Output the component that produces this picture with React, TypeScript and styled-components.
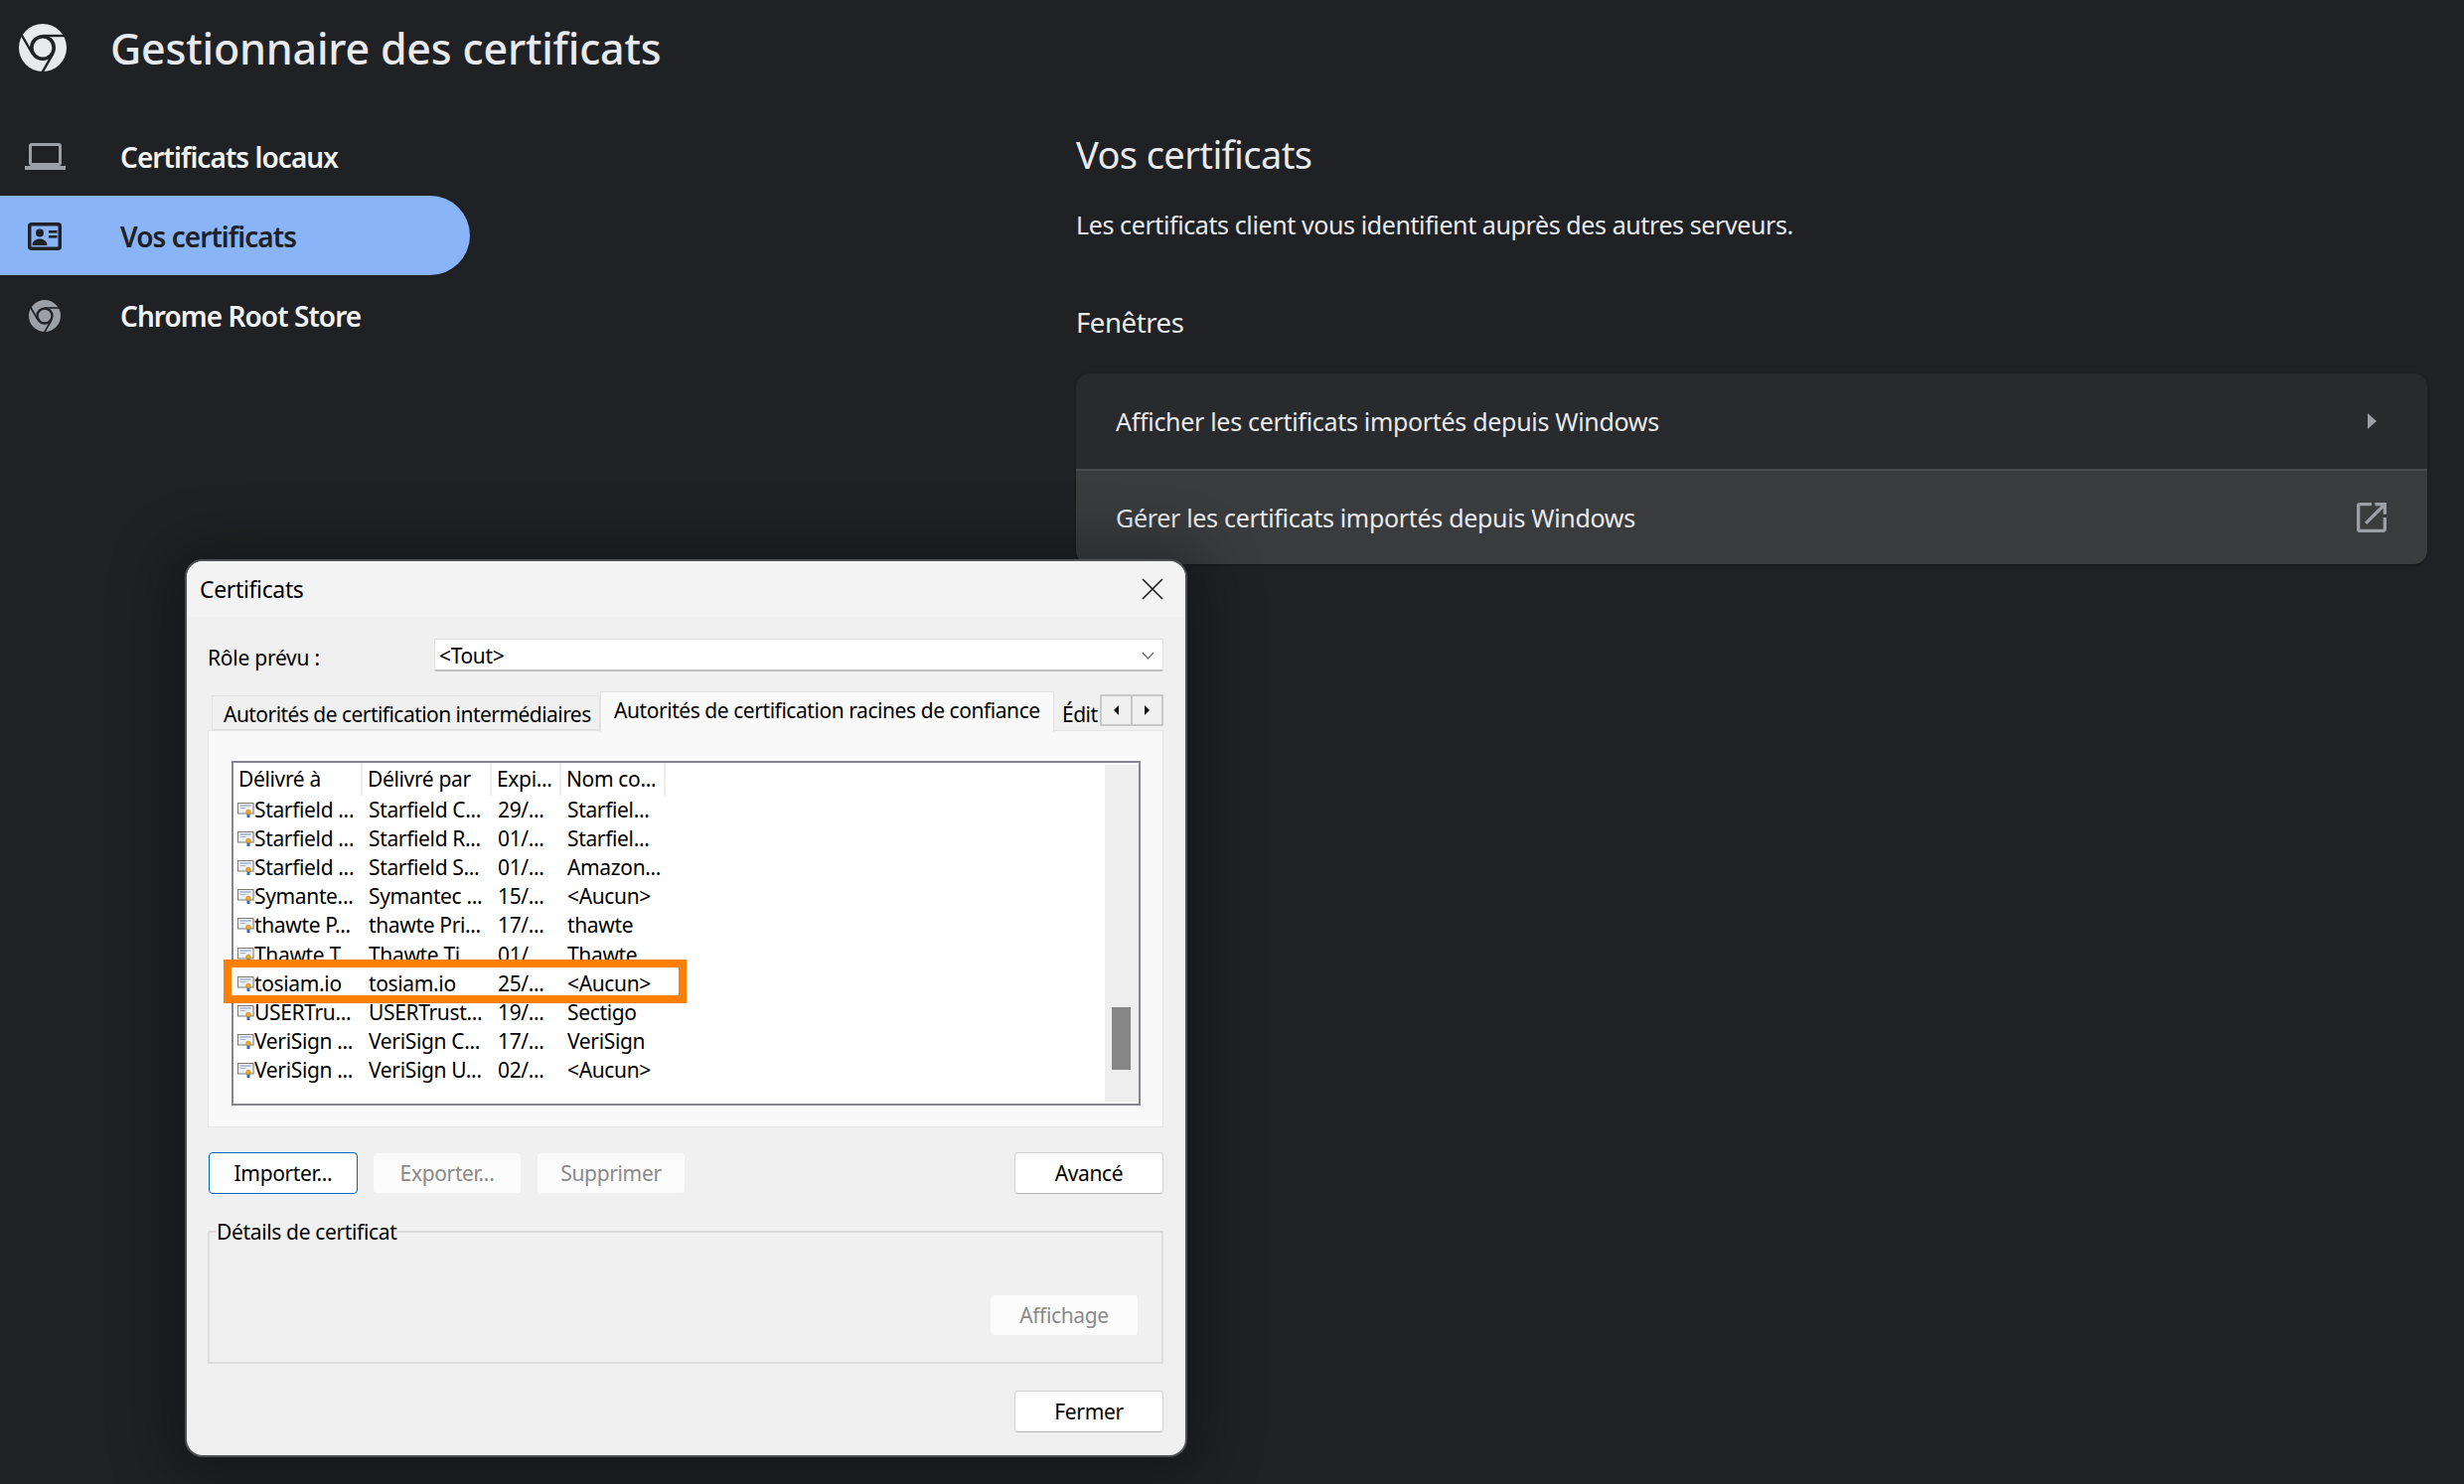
import React from 'react';
import styled, { createGlobalStyle } from 'styled-components';
import { MdOpenInNew } from 'react-icons/md';

const GlobalStyle = createGlobalStyle`
  html, body {
    margin: 0;
    padding: 0;
    background: #202124;
  }
  * {
    box-sizing: border-box;
  }
`;

const UI_FONT = `'Noto Sans', 'Open Sans', sans-serif`;

const Page = styled.div`
  position: relative;
  width: 2480px;
  height: 1494px;
  overflow: hidden;
  background: #202124;
  color: #e8eaed;
  font-family: ${UI_FONT};
`;

const Header = styled.header`
  display: flex;
  align-items: center;
  height: 96px;
  padding-left: 19px;
  gap: 44px;
`;

const Title = styled.h1`
  margin: 0;
  font-size: 43px;
  font-weight: 500;
  letter-spacing: -0.2px;
  color: #e8eaed;
`;

const Columns = styled.div`
  display: grid;
  grid-template-columns: 1083px 1360px;
`;

const Nav = styled.nav`
  padding-top: 21px;
`;

const NavItem = styled.div<{ $active?: boolean }>`
  display: flex;
  align-items: center;
  width: 473px;
  height: 80px;
  padding-top: 1px;
  border-radius: 0 40px 40px 0;
  background: ${(p) => (p.$active ? '#8ab4f8' : 'transparent')};
  color: ${(p) => (p.$active ? '#202124' : '#f1f3f4')};
  font-size: 28px;
  font-weight: 600;
  letter-spacing: -0.95px;
`;

const NavIcon = styled.span<{ $active?: boolean }>`
  display: flex;
  justify-content: center;
  width: 121px;
  padding-right: 31px;
  color: ${(p) => (p.$active ? '#202124' : '#9aa0a6')};
`;

const Main = styled.main`
  padding-top: 33px;
`;

const Heading = styled.h2`
  margin: 0;
  font-size: 38px;
  line-height: 52px;
  font-weight: 400;
  letter-spacing: -0.6px;
`;

const Description = styled.p`
  margin: 27px 0 0;
  font-size: 25px;
  line-height: 36px;
  letter-spacing: -0.4px;
`;

const SectionTitle = styled.h3`
  margin: 62px 0 0;
  font-size: 27.5px;
  line-height: 38px;
  font-weight: 400;
  letter-spacing: -0.4px;
`;

const Card = styled.div`
  margin-top: 32px;
  border-radius: 14px;
  overflow: hidden;
  background: #292a2d;
  box-shadow: 0 1px 3px rgba(0, 0, 0, 0.35);
`;

const CardRow = styled.div<{ $hover?: boolean }>`
  display: flex;
  align-items: center;
  justify-content: space-between;
  height: 96px;
  padding: 0 36px 0 40px;
  background: ${(p) => (p.$hover ? '#3a3b3d' : '#292a2d')};
  border-top: ${(p) => (p.$hover ? '2px solid #4a4b4e' : 'none')};
  font-size: 25px;
  letter-spacing: -0.31px;
`;

const RowIcon = styled.span`
  display: flex;
  align-items: center;
  justify-content: center;
  width: 40px;
  color: #9aa0a6;
`;

const Dialog = styled.section`
  position: absolute;
  left: 188px;
  top: 565px;
  width: 1005px;
  height: 900px;
  border-radius: 16px;
  overflow: hidden;
  background: #f0f0f0;
  color: #000;
  font-size: 21px;
  letter-spacing: -0.35px;
  box-shadow: 0 0 0 2px #505154, 0 4px 60px 20px rgba(0, 0, 0, 0.3);
`;

const DialogTitleBar = styled.div`
  display: flex;
  align-items: center;
  justify-content: space-between;
  height: 56px;
  padding: 0 22px 0 13px;
  background: #f3f3f3;
  font-size: 23px;
`;

const CloseIcon = styled.svg`
  width: 22px;
  height: 22px;
  stroke: #1a1a1a;
  stroke-width: 1.6;
`;

const DialogBody = styled.div`
  padding: 0 22px 0 21px;
`;

const RoleRow = styled.div`
  display: flex;
  align-items: center;
  margin-top: 22px;
  height: 33px;
`;

const RoleLabel = styled.label`
  flex: 0 0 228px;
  padding-top: 4px;
  letter-spacing: -0.25px;
`;

const Combo = styled.div`
  flex: 1;
  display: flex;
  align-items: center;
  justify-content: space-between;
  height: 33px;
  padding: 1px 8px 0 4px;
  background: #fff;
  border: 1px solid #e2e2e2;
  border-bottom: 2px solid #c0c0c0;
  border-radius: 2px;
`;

const TabStrip = styled.div`
  position: relative;
  display: flex;
  align-items: flex-end;
  height: 39px;
  margin-top: 20px;
  padding-left: 4px;
  white-space: nowrap;
`;

const Tab = styled.div<{ $active?: boolean; $plain?: boolean }>`
  position: relative;
  flex: none;
  height: ${(p) => (p.$active ? '41px' : '35px')};
  width: ${(p) => (p.$active ? '457px' : p.$plain ? '47px' : '391px')};
  margin-bottom: ${(p) => (p.$active ? '-2px' : '0')};
  z-index: ${(p) => (p.$active ? 1 : 0)};
  padding-left: ${(p) => (p.$active ? '13px' : p.$plain ? '7px' : '11px')};
  line-height: ${(p) => (p.$active ? '36px' : '36px')};
  letter-spacing: ${(p) => (p.$active ? '-0.44px' : '-0.54px')};
  background: ${(p) => (p.$active ? '#f9f9f9' : p.$plain ? 'transparent' : '#f0f0f0')};
  border: 1px solid ${(p) => (p.$plain ? 'transparent' : '#e2e2e2')};
  border-bottom: ${(p) => (p.$active ? 'none' : undefined)};
`;

const TabSpinner = styled.div`
  position: absolute;
  right: 0;
  top: 3px;
  display: flex;
  width: 64px;
  height: 32px;
  border: 2px solid #c8c8c8;
  background: #f0f0f0;
  z-index: 2;
`;

const SpinnerButton = styled.div`
  flex: 1;
  display: flex;
  align-items: center;
  justify-content: center;
  & + & {
    border-left: 2px solid #c8c8c8;
  }
`;

const TabPanel = styled.div`
  width: 962px;
  height: 400px;
  padding: 30px 0 0 23px;
  background: #f9f9f9;
  border: 1px solid #e5e5e5;
`;

const ListBox = styled.div`
  display: flex;
  width: 915px;
  height: 347px;
  background: #fff;
  border: 2px solid #85858f;
`;

const ListContent = styled.div`
  flex: 1;
`;

const columns = '130px 130px 70px 105px';

const ListHeader = styled.div`
  display: grid;
  grid-template-columns: ${columns};
  width: 435px;
  height: 33px;
`;

const HeaderCell = styled.div`
  padding-left: 5px;
  line-height: 33px;
  border-right: 2px solid #eeeeee;
`;

const ListRow = styled.div<{ $marked?: boolean }>`
  position: relative;
  z-index: ${(p) => (p.$marked ? 1 : 0)};
  display: grid;
  grid-template-columns: ${columns};
  width: 435px;
  height: 29.1px;
  line-height: 29px;
  white-space: nowrap;
  &::before {
    content: '';
    display: ${(p) => (p.$marked ? 'block' : 'none')};
    position: absolute;
    left: -10px;
    right: -21px;
    top: -10px;
    bottom: -5px;
    z-index: -1;
    background: #fff;
    border: 8px solid #ff7f00;
  }
`;

const Cell = styled.div`
  display: flex;
  align-items: center;
  padding-left: 6px;
`;

const NameCell = styled(Cell)`
  padding-left: 4px;
`;

const CertIcon = styled.svg`
  flex: none;
  width: 18px;
  height: 15px;
  margin-right: -1px;
`;

const ScrollBar = styled.div`
  flex: 0 0 34px;
  margin: 2px 0;
  background: #eeeeee;
  padding: 244px 8px 0 7px;
`;

const ScrollThumb = styled.div`
  height: 63px;
  background: #868686;
`;

const ButtonRow = styled.div`
  display: flex;
  gap: 15px;
  margin-top: 25px;
  padding-left: 1px;
`;

const FlatButton = styled.button<{ $default?: boolean; $end?: boolean }>`
  width: 150px;
  height: 42px;
  padding: 0;
  margin-left: ${(p) => (p.$end ? 'auto' : '0')};
  font-family: inherit;
  font-size: 21px;
  letter-spacing: -0.35px;
  color: #000;
  background: #fefefe;
  border: ${(p) => (p.$default ? '1.5px solid #0067c0' : '1px solid #d0d0d0')};
  border-bottom-color: ${(p) => (p.$default ? '#0067c0' : '#b0b0b0')};
  border-radius: 4px;
  &:disabled {
    color: #8a8a8a;
    background: #fbfbfb;
    border: 1px solid #efefef;
  }
`;

const DetailsGroup = styled.fieldset`
  display: flex;
  justify-content: flex-end;
  align-items: flex-end;
  height: 148px;
  margin: 23px 0 0;
  padding: 0 23px 26px 0;
  border: 2px solid #dcdcdc;
  border-radius: 0;
  min-inline-size: 0;
`;

const DetailsLegend = styled.legend`
  margin-left: 7px;
  padding: 0;
  line-height: 30px;
`;

const CloseRow = styled.div`
  display: flex;
  justify-content: flex-end;
  margin-top: 27px;
`;

const ChromeLogo = ({ size, stroke }: { size: number; stroke: string }) => (
  <svg width={size} height={size} viewBox="0 0 48 48">
    <circle cx="24" cy="24" r="24" fill="currentColor" />
    <circle cx="24" cy="24" r="11.2" fill="currentColor" stroke={stroke} strokeWidth="3.6" />
    {[0, 120, 240].map((angle) => (
      <line
        key={angle}
        x1="24"
        y1="12"
        x2="50"
        y2="12"
        stroke={stroke}
        strokeWidth="2.4"
        transform={`rotate(${angle} 24 24)`}
      />
    ))}
  </svg>
);

const LaptopIcon = () => (
  <svg width="41" height="27" viewBox="0 0 41 27">
    <rect x="5.5" y="1.5" width="30" height="20" rx="1.5" fill="none" stroke="currentColor" strokeWidth="3" />
    <rect x="0" y="23" width="41" height="4" fill="currentColor" />
  </svg>
);

const IdCardIcon = () => (
  <svg width="34" height="28" viewBox="0 0 34 28">
    <rect x="1.75" y="1.75" width="30.5" height="24.5" rx="2" fill="none" stroke="currentColor" strokeWidth="3.5" />
    <circle cx="12" cy="10.5" r="4" fill="currentColor" />
    <path d="M4.5 23c0-4.4 3.6-6.6 7.5-6.6s7.5 2.2 7.5 6.6z" fill="currentColor" />
    <rect x="21" y="8" width="8.5" height="2.6" fill="currentColor" />
    <rect x="21" y="13" width="8.5" height="2.6" fill="currentColor" />
  </svg>
);

const CertificateIcon = () => (
  <CertIcon viewBox="0 0 18 15">
    <rect x="0.5" y="0.5" width="15.5" height="10.5" fill="#eef0f6" stroke="#7f7a6c" />
    <rect x="16" y="1.5" width="1.2" height="10" fill="#b5b2a8" />
    <rect x="2.5" y="2.5" width="11" height="1" fill="#7d92b8" />
    <rect x="2.5" y="5" width="6" height="1" fill="#a7b4cc" />
    <rect x="9.5" y="11" width="3" height="4" fill="#2f6cc0" />
    <circle cx="11" cy="9.5" r="2.3" fill="#e9ad1f" stroke="#b9801a" strokeWidth="0.6" />
  </CertIcon>
);

const rows = [
  ['Starfield ...', 'Starfield C...', '29/...', 'Starfiel...'],
  ['Starfield ...', 'Starfield R...', '01/...', 'Starfiel...'],
  ['Starfield ...', 'Starfield S...', '01/...', 'Amazon...'],
  ['Symante...', 'Symantec ...', '15/...', '<Aucun>'],
  ['thawte P...', 'thawte Pri...', '17/...', 'thawte'],
  ['Thawte T...', 'Thawte Ti...', '01/...', 'Thawte'],
  ['tosiam.io', 'tosiam.io', '25/...', '<Aucun>'],
  ['USERTru...', 'USERTrust...', '19/...', 'Sectigo'],
  ['VeriSign ...', 'VeriSign C...', '17/...', 'VeriSign'],
  ['VeriSign ...', 'VeriSign U...', '02/...', '<Aucun>'],
];

export default function App() {
  return (
    <Page>
      <GlobalStyle />
      <Header>
        <ChromeLogo size={48} stroke="#202124" />
        <Title>Gestionnaire des certificats</Title>
      </Header>
      <Columns>
        <Nav>
          <NavItem>
            <NavIcon>
              <LaptopIcon />
            </NavIcon>
            Certificats locaux
          </NavItem>
          <NavItem $active>
            <NavIcon $active>
              <IdCardIcon />
            </NavIcon>
            Vos certificats
          </NavItem>
          <NavItem>
            <NavIcon>
              <ChromeLogo size={32} stroke="#202124" />
            </NavIcon>
            Chrome Root Store
          </NavItem>
        </Nav>
        <Main>
          <Heading>Vos certificats</Heading>
          <Description>Les certificats client vous identifient auprès des autres serveurs.</Description>
          <SectionTitle>Fenêtres</SectionTitle>
          <Card>
            <CardRow>
              Afficher les certificats importés depuis Windows
              <RowIcon>
                <svg width="9" height="16" viewBox="0 0 9 16">
                  <path d="M0 0l9 8-9 8z" fill="currentColor" />
                </svg>
              </RowIcon>
            </CardRow>
            <CardRow $hover>
              Gérer les certificats importés depuis Windows
              <RowIcon>
                <MdOpenInNew size={40} />
              </RowIcon>
            </CardRow>
          </Card>
        </Main>
      </Columns>

      <Dialog>
        <DialogTitleBar>
          Certificats
          <CloseIcon viewBox="0 0 22 22">
            <path d="M1 1l20 20M21 1L1 21" />
          </CloseIcon>
        </DialogTitleBar>
        <DialogBody>
          <RoleRow>
            <RoleLabel>Rôle prévu :</RoleLabel>
            <Combo>
              &lt;Tout&gt;
              <svg width="13" height="8" viewBox="0 0 13 8">
                <path d="M1 1l5.5 6L12 1" fill="none" stroke="#666" strokeWidth="1.2" />
              </svg>
            </Combo>
          </RoleRow>
          <TabStrip>
            <Tab>Autorités de certification intermédiaires</Tab>
            <Tab $active>Autorités de certification racines de confiance</Tab>
            <Tab $plain>Édit</Tab>
            <TabSpinner>
              <SpinnerButton>
                <svg width="5" height="10" viewBox="0 0 5 10">
                  <path d="M5 0L0 5l5 5z" fill="#111" />
                </svg>
              </SpinnerButton>
              <SpinnerButton>
                <svg width="5" height="10" viewBox="0 0 5 10">
                  <path d="M0 0l5 5-5 5z" fill="#111" />
                </svg>
              </SpinnerButton>
            </TabSpinner>
          </TabStrip>
          <TabPanel>
            <ListBox>
              <ListContent>
                <ListHeader>
                  <HeaderCell>Délivré à</HeaderCell>
                  <HeaderCell>Délivré par</HeaderCell>
                  <HeaderCell>Expi...</HeaderCell>
                  <HeaderCell>Nom co...</HeaderCell>
                </ListHeader>
                {rows.map((row, index) => (
                  <ListRow key={index} $marked={row[0] === 'tosiam.io'}>
                    <NameCell>
                      <CertificateIcon />
                      {row[0]}
                    </NameCell>
                    <Cell>{row[1]}</Cell>
                    <Cell>{row[2]}</Cell>
                    <Cell>{row[3]}</Cell>
                  </ListRow>
                ))}
              </ListContent>
              <ScrollBar>
                <ScrollThumb />
              </ScrollBar>
            </ListBox>
          </TabPanel>
          <ButtonRow>
            <FlatButton $default>Importer...</FlatButton>
            <FlatButton disabled>Exporter...</FlatButton>
            <FlatButton disabled>Supprimer</FlatButton>
            <FlatButton $end>Avancé</FlatButton>
          </ButtonRow>
          <DetailsGroup>
            <DetailsLegend>Détails de certificat</DetailsLegend>
            <FlatButton disabled>Affichage</FlatButton>
          </DetailsGroup>
          <CloseRow>
            <FlatButton>Fermer</FlatButton>
          </CloseRow>
        </DialogBody>
      </Dialog>
    </Page>
  );
}
